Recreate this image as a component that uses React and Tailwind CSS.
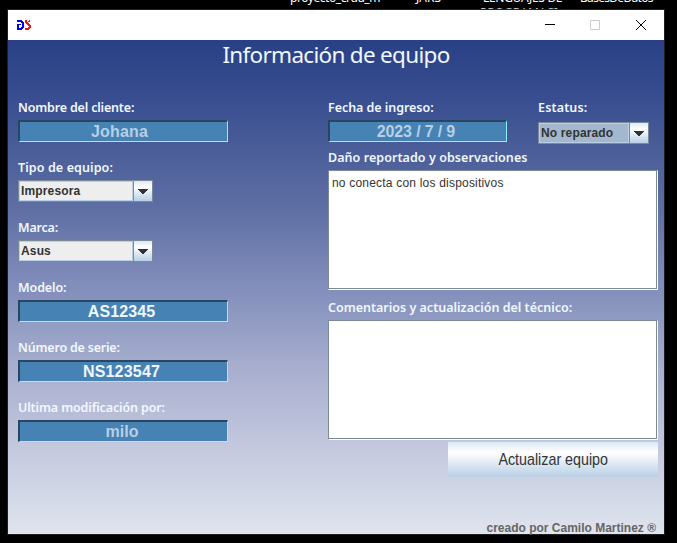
const TAHOMA = "font-['Noto_Sans','DejaVu_Sans',sans-serif]";
const ARIAL = "font-['Liberation_Sans',Arial,sans-serif]";

function Label({ children, className = '' }) {
  return (
    <div className={`h-5 whitespace-nowrap text-[12.5px] font-semibold leading-[15px] text-[#f0f8ff] ${TAHOMA} ${className}`}>
      {children}
    </div>
  );
}

function Field({ children, muted, className = '' }) {
  return (
    <div className={`h-[22px] border-2 border-r border-b border-t-[#26475f] border-l-[#26475f] border-r-[#8ff0ff] border-b-[#8ff0ff] bg-[#4682b4] text-center text-[16px] font-bold leading-[19px] ${muted ? 'text-[#b8cfe5]' : 'text-[#f0f8ff]'} ${ARIAL} ${className}`}>
      {children}
    </div>
  );
}

function Combo({ children, active, className = '' }) {
  return (
    <div className={`flex h-[22px] border border-[#7a8a99] ${className}`}>
      <div className={`flex-1 whitespace-nowrap border border-[#b8cfe5] pl-px text-[12px] font-bold leading-[18px] tracking-[0.15px] text-[#333333] ${active ? 'bg-[#a3b8cc]' : 'bg-[#eeeeee]'} ${ARIAL}`}>
        {children}
      </div>
      <div className="flex w-[19px] items-center justify-center border-l border-[#7a8a99] bg-linear-to-b from-[#dde8f3] via-white via-30% to-[#b8cfe5]">
        <svg width="10" height="5" viewBox="0 0 10 5" shapeRendering="crispEdges">
          <path d="M0 0h10v1h-1v1h-1v1h-1v1h-1v1h-2v-1h-1v-1h-1v-1h-1v-1h-1z" fill="#333" />
        </svg>
      </div>
    </div>
  );
}

function TextArea({ children, className = '' }) {
  return (
    <div className={`w-[330px] border border-t-[#7a8a99] border-l-[#7a8a99] border-r-white border-b-white bg-white ${className}`}>
      <div className={`h-full border-r border-b border-[#7a8a99] pt-[5px] pl-[3px] text-[12px] leading-[14px] tracking-[0.2px] text-[#333333] ${ARIAL}`}>
        {children}
      </div>
    </div>
  );
}

export default function App() {
  return (
    <div className="relative h-[543px] w-[677px] overflow-hidden bg-black pt-[9px] pl-[7px]">
      <div className={`absolute inset-x-0 -top-[9px] h-6 text-[12px] leading-[14px] text-white ${TAHOMA}`}>
        <span className="absolute left-[290px] tracking-[-0.45px]">proyecto_crud_m</span>
        <span className="absolute left-[416px]">JARS</span>
        <span className="absolute left-[483px] whitespace-nowrap tracking-[-0.3px]">LENGUAJES DE</span>
        <span className="absolute left-[480px] top-[15px] whitespace-nowrap text-[#bbbbbb]">PROGRAMACI...</span>
        <span className="absolute left-[580px] tracking-[-0.7px]">BasesDeDatos</span>
      </div>

      <div className="relative flex h-[526px] w-[658px] flex-col border border-[#202020]">
        <header className="flex h-[30px] shrink-0 items-center bg-white pl-[9px]">
          <svg width="15" height="10" viewBox="0 0 15 10" shapeRendering="crispEdges">
            <path d="M0 0h5v1h1v1h1v6h-1v1h-1v1H0V4h2v4h2v-1h1V3h-1v-1H0zM2 4h2v1h-2z" fill="#0000ff" />
            <path d="M8 0h2v2h1v1h1v1h1v1h1v3h-1v1h-1v1H8V8h3v-1h1v-1h-1v-1h-1v-1h-1v-1h-1zM11 1h1v-1h1v2h-2z" fill="#ff0f0f" />
          </svg>
          <div className="ml-auto flex items-center pr-[17px]">
            <svg width="103" height="12" viewBox="0 0 103 12" fill="none">
              <path d="M1 5.500h10" stroke="#000" />
              <path d="M46.500 1.500h9v9h-9z" stroke="#cccccc" />
              <path d="M92 1l10 10M102 1l-10 10" stroke="#000" />
            </svg>
          </div>
        </header>

        <main className="flex min-h-0 flex-1 flex-col bg-[linear-gradient(to_bottom,#294085_0%,#384e90_12%,#4a5d98_22%,#6070a5_35%,#7c88b7_47%,#8c98c0_55%,#a5accd_65%,#c1c6dd_81%,#dfe4ee_100%)]">
          <h1 className={`h-[60px] text-center text-[22.5px] leading-[29px] tracking-[-0.7px] text-[#f0f8ff] ${TAHOMA}`}>
            Información de equipo
          </h1>

          <div className="flex h-[434px] pl-[10px]">
            <section className="w-[310px]">
              <div className="h-[60px]">
                <Label className="tracking-[-0.18px]">Nombre del cliente:</Label>
                <Field muted className="w-[210px] pr-[8px] tracking-[0.2px]">Johana</Field>
              </div>
              <div className="h-[60px]">
                <Label className="tracking-[0.1px]">Tipo de equipo:</Label>
                <Combo className="w-[135px]">Impresora</Combo>
              </div>
              <div className="h-[60px]">
                <Label className="tracking-[-0.2px]">Marca:</Label>
                <Combo className="w-[135px]">Asus</Combo>
              </div>
              <div className="h-[60px]">
                <Label className="tracking-[-0.1px]">Modelo:</Label>
                <Field className="w-[210px] pr-[4px] tracking-[0.1px]">AS12345</Field>
              </div>
              <div className="h-[60px]">
                <Label className="tracking-[-0.2px]">Número de serie:</Label>
                <Field className="w-[210px] pr-[4px] tracking-[0.2px]">NS123547</Field>
              </div>
              <div className="h-[60px]">
                <Label className="tracking-[-0.13px]">Ultima modificación por:</Label>
                <Field muted className="w-[210px] pr-[3px]">milo</Field>
              </div>
            </section>

            <section className="flex w-[330px] flex-col">
              <div className="flex h-[50px] gap-[30px]">
                <div className="w-[180px]">
                  <Label className="tracking-[-0.05px]">Fecha de ingreso:</Label>
                  <Field muted className="w-[179px] pr-[4px] tracking-[-0.15px]">2023 / 7 / 9</Field>
                </div>
                <div>
                  <Label className="tracking-[0.15px]">Estatus:</Label>
                  <Combo active className="mt-[2px] w-[111px]">No reparado</Combo>
                </div>
              </div>
              <Label className="tracking-[0.06px]">Daño reportado y observaciones</Label>
              <TextArea className="mb-[10px] h-[120px]">no conecta con los dispositivos</TextArea>
              <Label>Comentarios y actualización del técnico:</Label>
              <TextArea className="h-[120px]" />
              <button className={`mt-[2px] h-[35px] w-[210px] self-end bg-linear-to-b from-[#dde8f3] via-white via-30% to-[#b8cfe5] pt-px text-[17px] text-[#333333] ${ARIAL}`}>
                <span className="inline-block scale-x-[0.84] whitespace-nowrap">Actualizar equipo</span>
              </button>
              <p className={`mt-auto -mb-px mr-[2px] text-right text-[12px] font-bold leading-[14px] text-[#666666] ${ARIAL}`}>
                creado por Camilo Martinez ®
              </p>
            </section>
          </div>
        </main>
      </div>
    </div>
  );
}
